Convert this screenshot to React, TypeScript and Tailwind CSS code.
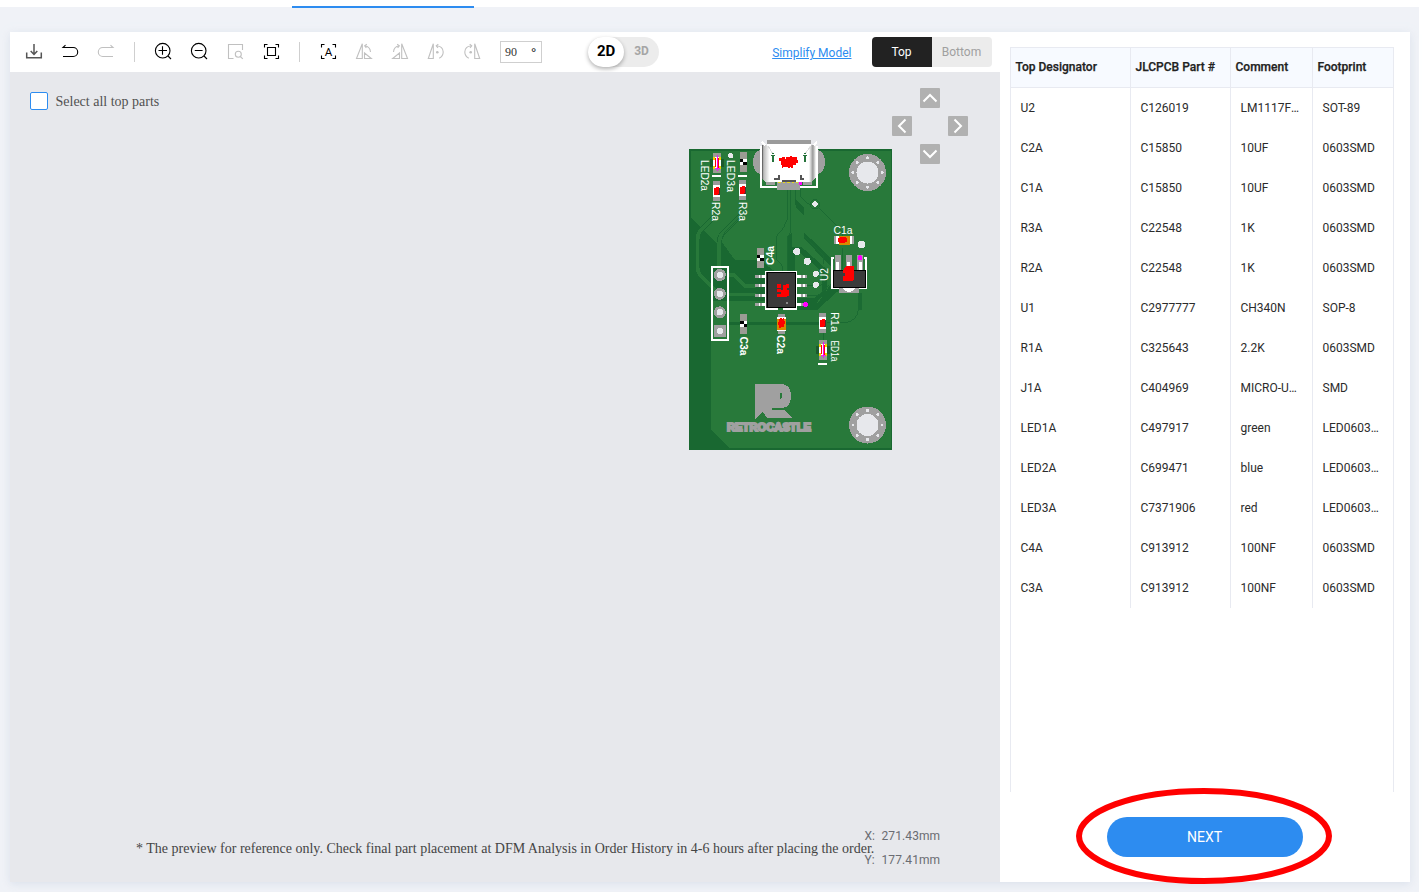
import type { ReactNode } from 'react';

const rows = [
  ['U2', 'C126019', 'LM1117F-ADJ', 'SOT-89'],
  ['C2A', 'C15850', '10UF', '0603SMD'],
  ['C1A', 'C15850', '10UF', '0603SMD'],
  ['R3A', 'C22548', '1K', '0603SMD'],
  ['R2A', 'C22548', '1K', '0603SMD'],
  ['U1', 'C2977777', 'CH340N', 'SOP-8'],
  ['R1A', 'C325643', '2.2K', '0603SMD'],
  ['J1A', 'C404969', 'MICRO-USB', 'SMD'],
  ['LED1A', 'C497917', 'green', 'LED0603_A'],
  ['LED2A', 'C699471', 'blue', 'LED0603_A'],
  ['LED3A', 'C7371906', 'red', 'LED0603_A'],
  ['C4A', 'C913912', '100NF', '0603SMD'],
  ['C3A', 'C913912', '100NF', '0603SMD'],
];

const heads = ['Top Designator', 'JLCPCB Part #', 'Comment', 'Footprint'];

function Tool({ children, off = false }: { children: ReactNode; off?: boolean }) {
  return (
    <button className={`flex h-10 w-9 shrink-0 items-center justify-center pb-0.5 ${off ? 'text-[#c0c0c0]' : 'text-black'}`}>
      <svg width="18" height="18" viewBox="0 0 18 18" fill="none" stroke="currentColor" strokeWidth="1.1">
        {children}
      </svg>
    </button>
  );
}

const Divider = () => <div className="mx-2.5 h-5 w-px shrink-0 bg-[#cfcfcf]" />;

const Corners = () => <path d="M2.500 5.500v-3h3M13.500 2.500h3v3M16.500 13.500v3h-3M5.500 16.500h-3v-3" />;

function FlipGlyph() {
  return (
    <g>
      <path d="M7.300 1.800v14.700H1.500zM9.500 11v5.500h6.800zM10 4c3.300.3 5.200 2.500 5.500 6" />
      <path d="M11.800 2.300L9.700 3.900l1.700 1.900" />
    </g>
  );
}

function TurnGlyph() {
  return (
    <g>
      <path d="M6.300 1.800v14.700h-5zM9.500 4c4.300-.3 6.700 2.500 6.700 6 0 2.700-1.300 4.800-4 6.200" />
      <path d="M11.300 2.300L9.300 3.900l1.700 1.900" />
      <circle cx="10.300" cy="10.300" r="1.300" fill="currentColor" stroke="none" />
    </g>
  );
}

function Toolbar() {
  return (
    <div className="flex h-10 shrink-0 items-center bg-white pl-1.5 pr-2">
      <Tool>
        <g stroke="#555" strokeWidth="1.500">
          <path d="M9 2v10.500M5.700 9L9 12.500 12.300 9" />
          <path d="M1.700 10.500v5.300h14.600v-5.300" />
        </g>
      </Tool>
      <Tool>
        <path d="M4.500 3.200L2 5.500h10.200a4.500 4.500 0 0 1 0 9H2" />
      </Tool>
      <Tool off>
        <path d="M13.500 3.200L16 5.500H5.800a4.500 4.500 0 0 0 0 9H16" />
      </Tool>
      <Divider />
      <Tool>
        <circle cx="8.700" cy="8.700" r="7.300" />
        <path d="M4.500 8.500h8.500M8.500 4.300v8.500M14 14l3 3" />
      </Tool>
      <Tool>
        <circle cx="8.700" cy="8.700" r="7.300" />
        <path d="M4.800 8.500h7.800M14 14l3 3" />
      </Tool>
      <Tool off>
        <path d="M7.500 16.500h-5v-14h14v5.500" />
        <circle cx="12.300" cy="12.200" r="3" />
        <path d="M14.300 14.500l2.500 2.300" />
      </Tool>
      <Tool>
        <Corners />
        <path d="M5.500 5.500h8v8h-8z" />
      </Tool>
      <Divider />
      <Tool>
        <Corners />
        <text x="9.500" y="13.800" textAnchor="middle" fontSize="11.500" fontFamily="Roboto, sans-serif" fill="currentColor" stroke="none">
          A
        </text>
      </Tool>
      <Tool off>
        <FlipGlyph />
      </Tool>
      <Tool off>
        <g transform="matrix(-1 0 0 1 18 0)">
          <FlipGlyph />
        </g>
      </Tool>
      <Tool off>
        <TurnGlyph />
      </Tool>
      <Tool off>
        <g transform="matrix(-1 0 0 1 18 0)">
          <TurnGlyph />
        </g>
      </Tool>
      <div className="ml-2.5 flex h-[22px] w-[42px] shrink-0 items-center justify-between border border-[#cfcfcf] pl-1 pr-[5px] font-['Liberation_Serif',serif] text-[12px] text-[#333]">
        <span>90</span>
        <span className="font-bold text-black">°</span>
      </div>
      <div className="ml-[46px] flex h-[30px] w-[71px] shrink-0 items-center rounded-full bg-[#ececec]">
        <span className="flex h-[30px] w-9 items-center justify-center rounded-full bg-white pb-0.5 text-[15px] font-bold tracking-[-.2px] text-black shadow-[0_2px_4px_rgba(0,0,0,.3)]">
          2D
        </span>
        <span className="flex-1 pb-0.5 text-center text-[12px] font-bold text-[#a5a5a5]">3D</span>
      </div>
      <a className="ml-auto mr-[20.500px] pt-0.5 text-[12px] text-[#2d8cf0] underline">Simplify Model</a>
      <div className="flex h-[30px] overflow-hidden rounded-sm text-[12px]">
        <span className="flex w-[60px] items-center justify-center bg-[#222] pr-px text-white">Top</span>
        <span className="flex w-[60px] items-center justify-center bg-[#ececec] pr-px text-[#a0a0a0]">Bottom</span>
      </div>
    </div>
  );
}

function Label({ x, y, r = 0, len, bold = false, children }: { x: number; y: number; r?: number; len: number; bold?: boolean; children: string }) {
  return (
    <text
      transform={`translate(${x} ${y}) rotate(${r})`}
      fontSize="10"
      fontWeight={bold ? 700 : 400}
      fontFamily="'Liberation Sans', sans-serif"
      textLength={len}
      lengthAdjust="spacingAndGlyphs"
      fill="#fff"
    >
      {children}
    </text>
  );
}

function Hole({ x, y }: { x: number; y: number }) {
  const d = [0, 45, 90, 135, 180, 225, 270, 315];
  return (
    <g transform={`translate(${x} ${y})`}>
      <circle r="18.500" fill="#a0a0a0" />
      <circle r="11" fill="#e7e8ec" />
      {d.map((a) => (
        <circle key={a} cx="14.600" r="1.500" fill="#e7e8ec" transform={`rotate(${a})`} />
      ))}
    </g>
  );
}

function Checker({ x, y }: { x: number; y: number }) {
  return (
    <g transform={`translate(${x} ${y})`}>
      <path d="M0 0h7v20H0z" fill="#9b9b94" />
      <path d="M0 7h7v6H0z" fill="#000" />
      <path d="M3.500 7H7v3H3.500zM0 10h3.500v3H0z" fill="#fff" />
    </g>
  );
}

function Resistor({ x, y }: { x: number; y: number }) {
  return (
    <g transform={`translate(${x} ${y})`}>
      <path d="M0 0h7v20H0z" fill="#9b9b9b" />
      <path d="M0 4h7v12H0z" fill="#fff" />
      <path d="M.5 7h6.500v6.500H.5z" fill="#4a3030" />
      <path d="M1 7h2v-1h3v7H4.500v1H1.500z" fill="#f00" />
    </g>
  );
}

function Led({ x, y }: { x: number; y: number }) {
  return (
    <g transform={`translate(${x} ${y})`}>
      <path d="M-3 6h14v8H-3z" fill="#1c5a2d" />
      <path d="M0 0h8v20H0z" fill="#9b9b94" />
      <path d="M0 4h8v12H0z" fill="#fff" />
      <path d="M1 4v3M7 4v3M1 13v3M7 13v3" stroke="#f3d400" strokeWidth="1.500" />
      <path d="M2.700 5v9" stroke="#f00" strokeWidth="1" />
      <path d="M5.200 5v10" stroke="#f00" strokeWidth="1.700" />
      <path d="M4.200 2v16M2 15.500h4.500" stroke="#f0f" strokeWidth=".9" />
    </g>
  );
}

const TRACES =
  'M95 235L45 285Q38 295 38 310V395Q38 410 48 420L92 464M170 235L112 293Q103 303 103 320V400M125 417H148L180 450H212M125 476H212';

function Copper() {
  return (
    <g transform="translate(685 136) scale(.33333)" fill="none">
      <path
        d="M12 40H18V245L98 325V390H78V880L135 938H12zM108 315L150 372H208V395H240V495H78V385H108z"
        fill="#196831"
      />
      <path
        d="M208 372H225L268 405H205zM330 175L332 190 358 215V290L440 368V395L358 308V240L332 215zM308 300L320 290V333H350L425 400V465L395 500H332V487H388L412 465V410L380 380 345 350H330V405H308zM332 523H395L465 460V440H440L400 500H332z"
        fill="#196831"
      />
      <path d="M18 330V880M78 490H230" stroke="#196831" strokeWidth="4" />
      <path d="M130 562H410" stroke="#196831" strokeWidth="9" />
      <path d={TRACES} stroke="#196831" strokeWidth="16" />
      <path d={TRACES} stroke="#28793a" strokeWidth="11" />
      <path d="M162 247L122 287Q113 295 113 305M307 160V250Q300 275 277 298 275 302 275 310V370L294 392V405M317 160V290L307 302V405M332 160V190M346 160V182L375 208 385 202M390 205L472 286V300M358 300L415 358V385M472 335V398M345 450H405L430 425M345 478H400L430 448" stroke="#1b6b33" strokeWidth="3" />
      <path d="M525 470V522" stroke="#1b6b33" strokeWidth="12" />
      <path d="M520 522Q515 555 482 560H425M417 585V612" stroke="#1b6b33" strokeWidth="3" />
      <path d="M14 42H619V939H14z" stroke="#196831" strokeWidth="4" />
      <circle cx="390" cy="205" r="14" stroke="#1b6b33" strokeWidth="3" />
    </g>
  );
}

function Board() {
  const pins = [276.5, 285.5, 295, 304.5];
  const vias = [
    [815, 204, 2.6],
    [796.7, 251.5, 3.5],
    [807.3, 261.3, 3.5],
    [815.7, 273.8, 3],
    [815.7, 284.8, 3],
    [861.5, 244.5, 3.7],
    [730.7, 155.7, 2.6],
  ];
  return (
    <svg width="203" height="310" viewBox="689 140 203 310" shapeRendering="crispEdges" className="absolute left-[679px] top-[68px]">
      <path d="M689 149h203v301H689z" fill="#28793a" />
      <Copper />

      <ellipse cx="761" cy="162" rx="8" ry="12" fill="#a0a0a0" />
      <ellipse cx="817" cy="162" rx="8" ry="12" fill="#a0a0a0" />
      <path d="M761 146v41h56v-41" fill="#28793a" stroke="#fff" strokeWidth="1.700" />
      <path d="M766 182h9v3h-9zM803 182h9v3h-9z" fill="#a0a0a0" />
      <path d="M777 182h23v8h-23z" fill="#a0a0a0" />
      <path d="M761.500 145h54v33l-4 4h-46l-4-4z" fill="url(#shell)" />
      <path d="M767 140h44v5h-44z" fill="#9b9b9b" />
      <path d="M767 144.500h44M762 141.500l3 4M817 141.500l-3 4" stroke="#fff" strokeWidth="2" />
      <path d="M768 146l5 8M811 146l-6 8" stroke="#ddd" />
      <path d="M771 155.500h4M773 153v1M773 156v6M803 155.500h4M805 153v1M805 156v6" stroke="#26733b" strokeWidth="1.700" />
      <path d="M779 158h3v-1h3v2h1v-2h4v-1h2v1h5v3h1v3h-2v2h-3v3h-2v-1h-1v1h-2v-1h-5v1h-1v-3h-1v-4h-2z" fill="#f00" />
      <path d="M779 175v4h-5M801 175v4h3" stroke="#555" strokeWidth="2" fill="none" />
      <path d="M782 181h14" stroke="#555" strokeWidth="1.500" />
      <path d="M778 182.700h20" stroke="#e7d51c" strokeWidth="1.300" strokeDasharray="2.500 2" />
      <path d="M799 182h3v3h-3z" fill="#f0f" />

      <Hole x={867.5} y={172.5} />
      <Hole x={867.5} y={425} />
      {vias.map(([x, y, r]) => (
        <circle key={`${x}-${y}`} cx={x} cy={y} r={r} fill="#e7e8ec" />
      ))}

      <Led x={713} y={153} />
      <Checker x={739.5} y={152} />
      <path d="M712 176h9M738 176h9M818 364h9" stroke="#fff" strokeWidth="2" />
      <Resistor x={713} y={181} />
      <Resistor x={739} y={180} />
      <Label x={700.5} y={160} r={90} len={31}>LED2a</Label>
      <Label x={727} y={160} r={90} len={32}>LED3a</Label>
      <Label x={711.5} y={202} r={90} len={19}>R2a</Label>
      <Label x={738.5} y={202} r={90} len={19}>R3a</Label>

      <path d="M834 236h20v8h-20z" fill="#a0a0a0" />
      <path d="M836 236h16v8h-16z" fill="#fff" />
      <path d="M839 236h11v9h-11z" fill="#d88900" />
      <path d="M838 238h2v-1h6v1h1v4h-2v1h-6v-1h-1z" fill="#f00" />
      <Label x={833.5} y={234} len={19}>C1a</Label>

      <path d="M834 258h-2v30h34v-30h-2" fill="none" stroke="#fff" strokeWidth="1.500" />
      <path d="M835 255h6v15h-6zM846 255h6v15h-6zM857 255h6v15h-6z" fill="#a0a0a0" />
      <path d="M837.500 262v8M848.500 262v8M860 262v8" stroke="#fff" strokeWidth="3" />
      <path d="M833.500 270h31.500v17.500h-31.500z" fill="#3b3b3b" stroke="#000" />
      <path d="M839 288h20v5h-20z" fill="#a0a0a0" />
      <path d="M843 288h12q-2 4-6 4t-6-4z" fill="#fff" />
      <path d="M844 268l3-2h7v14l-3 1h-8v-5h2v-3h-2z" fill="#f00" />
      <circle cx="860" cy="257.700" r="2.500" fill="#f0f" />
      <Label x={827.5} y={281} r={-90} len={13}>U2</Label>

      <Checker x={756.5} y={248} />
      <Label x={773.5} y={265} r={-90} len={19} bold>C4a</Label>
      <path d="M711.500 266.500h16v73h-16z" fill="none" stroke="#fff" strokeWidth="2" />
      {[275, 293.8, 312.3].map((y) => (
        <g key={y}>
          <circle cx="719.800" cy={y} r="6" fill="#a0a0a0" />
          <circle cx="719.800" cy={y} r="3.200" fill="#e7e8ec" />
        </g>
      ))}
      <path d="M714 325h12v12h-12z" fill="#a0a0a0" />
      <circle cx="719.800" cy="331" r="3.200" fill="#e7e8ec" />

      {pins.map((y) => (
        <g key={y} stroke="#a0a0a0" strokeWidth="3">
          <path d={`M755 ${y}h11M796 ${y}h11`} />
          <path d={`M758.500 ${y}h1.500M762 ${y}h4M797 ${y}h4M803 ${y}h1.500`} stroke="#fff" strokeWidth="3" />
        </g>
      ))}
      <path d="M765.500 271.500h30.500v37.500h-30.500z" fill="#3b3b3b" stroke="#fff" strokeWidth="1.500" />
      <path d="M767 272.700h28v35h-28z" fill="#3b3b3b" stroke="#000" />
      <path d="M778 308h5v3h-5z" fill="#28793a" />
      <path d="M777 284h4v6h2v-5h3v-1h3v4h-2v2h2v6h-2v1h-10v-3h4v-2h-4v-3h4v-1h-4z" fill="#f00" />
      <path d="M786 302h2v2h-2z" fill="#888" />
      <circle cx="805.700" cy="304.500" r="2.500" fill="#f0f" />

      <Checker x={740} y={314} />
      <Label x={739.5} y={336.5} r={90} len={19} bold>C3a</Label>
      <path d="M778 314h7v20h-7z" fill="#9b9b9b" />
      <path d="M777 317h9v14h-9z" fill="#fff" />
      <path d="M777 319h9v11h-9z" fill="#d88900" />
      <path d="M779 319h1v-1h2v1h1v-1h1v3h1v3h-1v3h-3v1h-2v-3h-1v-3h1z" fill="#f00" />
      <Label x={777} y={335} r={90} len={19} bold>C2a</Label>
      <Resistor x={819} y={313} />
      <Label x={830.5} y={312} r={90} len={20}>R1a</Label>
      <Led x={819} y={340} />
      <Label x={831} y={340.5} r={90} len={21}>ED1a</Label>

      <path
        fillRule="evenodd"
        d="M755 384h28q8 2 8 12 0 10-8 12h-11v2h12l8 8H767l-4-6-8 7zM780 393v6l2-1v-5z"
        fill="#a0a0a0"
      />
      <text
        x="727"
        y="431"
        fontSize="11"
        fontWeight="700"
        fontFamily="'Liberation Sans', sans-serif"
        textLength="84"
        lengthAdjust="spacingAndGlyphs"
        fill="#a0a0a0"
        stroke="#a0a0a0"
        strokeWidth="2"
      >
        RETROCASTLE
      </text>
      <defs>
        <linearGradient id="shell">
          <stop stopColor="#222" />
          <stop offset=".04" stopColor="#bbb" />
          <stop offset=".15" stopColor="#fff" />
          <stop offset=".88" stopColor="#fff" />
          <stop offset=".95" stopColor="#999" />
          <stop offset="1" stopColor="#eee" />
        </linearGradient>
      </defs>
    </svg>
  );
}

function Arrow({ d }: { d: string }) {
  return (
    <button className="h-5 w-5 rounded-[1px] bg-[#b1b1b1]">
      <svg width="20" height="20" viewBox="0 0 20 20" fill="none" stroke="#fff" strokeWidth="2">
        <path d={d} />
      </svg>
    </button>
  );
}

function Canvas() {
  return (
    <div className="relative flex flex-1 flex-col justify-between overflow-hidden bg-[#e7e8ec]">
      <label className="flex items-start gap-[7.500px] pl-5 pt-5 font-['Liberation_Serif',serif] text-[14px] leading-5 text-[#515151]">
        <span className="h-[18px] w-[18px] rounded-[2px] border border-[#2d8cf0] bg-white" />
        Select all top parts
      </label>
      <p className="pb-[23px] pl-[126px] font-['Liberation_Serif',serif] text-[14px] leading-5 text-[#444]">
        * The preview for reference only. Check final part placement at DFM Analysis in Order History in 4-6 hours after placing the order.
      </p>
      <Board />
      <div className="absolute right-8 top-4 grid grid-cols-3 gap-2">
        <span />
        <Arrow d="M3.500 13.500L10 7l6.500 6.500" />
        <span />
        <Arrow d="M13.500 3.500L7 10l6.500 6.500" />
        <span />
        <Arrow d="M6.500 3.500L13 10l-6.500 6.500" />
        <span />
        <Arrow d="M3.500 6.500L10 13l6.500-6.500" />
      </div>
      <div className="absolute bottom-[10px] left-[854.500px] text-[12px] leading-6 tracking-[.1px] text-[#6a6c72]">
        <div className="flex"><span className="w-[17px]">X:</span>271.43mm</div>
        <div className="flex"><span className="w-[17px]">Y:</span>177.41mm</div>
      </div>
    </div>
  );
}

function Parts() {
  return (
    <div className="flex w-[410px] flex-col items-start bg-white pl-2.5 pt-[15px]">
      <div className="h-[745px] w-[384px] border-x border-[#e8eaf1] text-[12px] text-[#2b2b2b]">
        <div className="grid h-[41px] grid-cols-[120px_100px_82px_80px] border-y border-[#e8eaf1] bg-[#f7faff] font-medium text-[#222] [-webkit-text-stroke:.25px_#222]">
          {heads.map((h, i) => (
            <div key={h} className={`flex items-center pb-0.5 pl-[4.500px] ${i < 3 ? 'border-r border-[#e8eaf1]' : ''}`}>
              {h}
            </div>
          ))}
        </div>
        {rows.map((row) => (
          <div key={row[0]} className="grid h-10 grid-cols-[120px_100px_82px_80px]">
            {row.map((cell, i) => (
              <div key={i} className={`min-w-0 truncate pl-[9.500px] pr-2.5 leading-10 ${i < 3 ? 'border-r border-[#e8eaf1]' : ''}`}>
                {cell}
              </div>
            ))}
          </div>
        ))}
      </div>
      <div className="relative ml-[97px] mt-[25px]">
        <button className="h-10 w-[196px] rounded-full bg-[#2d8cf0] pr-px text-[14px] text-white">NEXT</button>
        <svg className="pointer-events-none absolute -left-[31px] -top-[29px]" width="256" height="96">
          <ellipse cx="128" cy="48" rx="125" ry="45" fill="none" stroke="#f00" strokeWidth="6" />
        </svg>
      </div>
    </div>
  );
}

export default function App() {
  return (
    <div className="h-[892px] w-[1422px] overflow-hidden bg-white pr-[3px] font-[Roboto,sans-serif]">
      <div className="flex h-full flex-col bg-[#f0f2f7]">
        <div className="h-[7px] bg-white pl-[292px] pt-1.5">
          <div className="h-0.5 w-[182px] bg-[#2d8cf0]" />
        </div>
        <div className="ml-2.5 mt-[25px] flex h-[850px] w-[1400px] shadow-[0_2px_8px_rgba(205,215,228,.6)]">
          <main className="flex w-[990px] flex-col">
            <Toolbar />
            <Canvas />
          </main>
          <Parts />
        </div>
      </div>
    </div>
  );
}
